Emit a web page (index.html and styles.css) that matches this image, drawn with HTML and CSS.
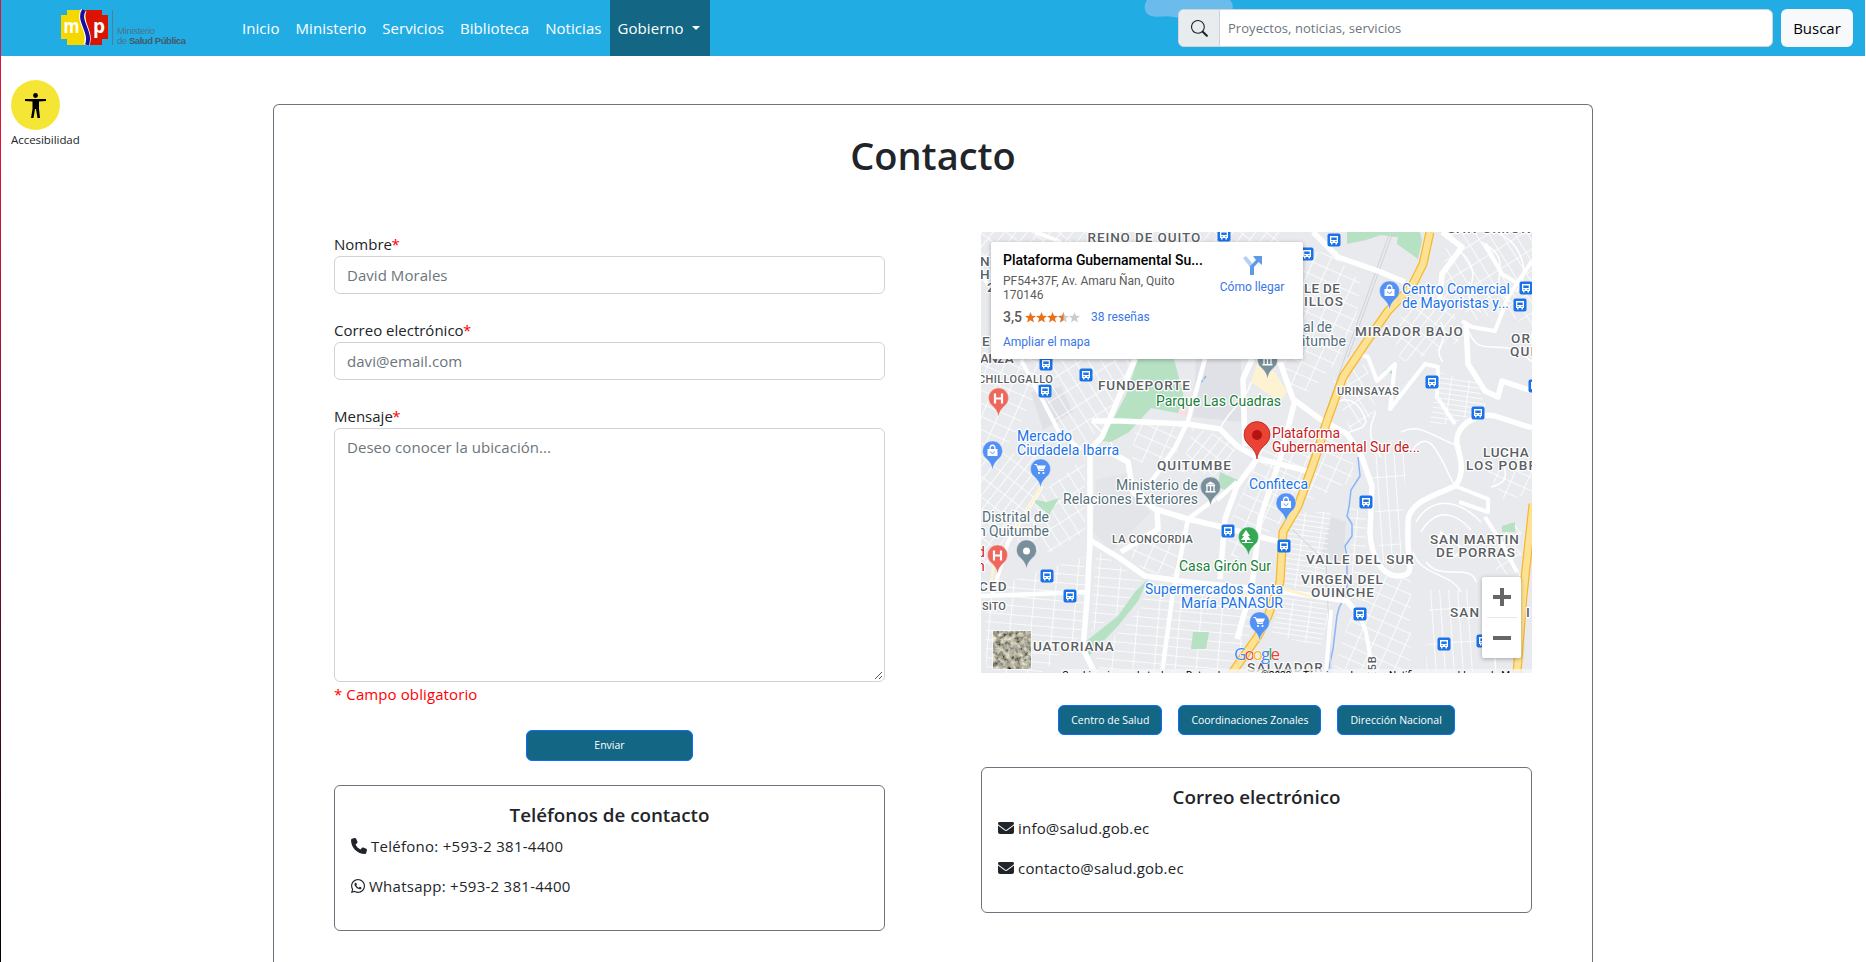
FILE: index.html
```html
<!DOCTYPE html>
<html lang="es">
<head>
<meta charset="utf-8">
<title>Contacto</title>
<link rel="stylesheet" href="styles.css">
</head>
<body>
<header class="navbar">
  <svg class="cloud" width="90" height="18" viewBox="0 0 90 18"><path d="M3 0C-1 6 0 14 7 16C14 18 22 15 29 17C40 19 78 19 84 15C90 11 90 5 86 0Z" fill="#6bbcec"/></svg>
  <svg class="logo" width="128" height="38" viewBox="0 0 128 38">
    <path d="M6 1H29V36H6V30H0V6H6Z" fill="#f5d800"/>
    <path d="M24 1H41V6H47V30H41V36H27Z" fill="#d91400"/>
    <path d="M23 1C16 12 31 22 25.500 36" fill="none" stroke="#fff" stroke-width="6"/>
    <path d="M23 1C16 12 31 22 26 36" fill="none" stroke="#1a0fa0" stroke-width="4"/>
    <text x="2.500" y="24" class="logo-letter" textLength="16" lengthAdjust="spacingAndGlyphs">m</text>
    <text x="32" y="24" class="logo-letter">p</text>
    <path d="M51.500 1V36" stroke="#4d8196"/>
    <text x="56" y="25" class="logo-text" textLength="38">Ministerio</text>
    <text x="56" y="35" class="logo-text" textLength="69">de <tspan class="logo-strong">Salud Pública</tspan></text>
  </svg>
  <nav class="menu">
    <a>Inicio</a><a>Ministerio</a><a>Servicios</a><a>Biblioteca</a><a>Noticias</a>
    <a class="active">Gobierno <i class="caret"></i></a>
  </nav>
  <div class="search">
    <span class="search-icon"><svg width="17" height="17" viewBox="0 0 16 16"><path fill="#212529" d="M11.742 10.344a6.500 6.500 0 1 0-1.397 1.398l3.850 3.850a1 1 0 0 0 1.415-1.414l-3.850-3.850zM12 6.500a5.500 5.500 0 1 1-11 0 5.500 5.500 0 0 1 11 0z"/></svg></span>
    <span class="search-field">Proyectos, noticias, servicios</span>
  </div>
  <button class="search-btn">Buscar</button>
</header>

<div class="access">
  <svg width="49" height="50" viewBox="0 0 49 50"><ellipse cx="24.500" cy="25" rx="24.500" ry="25" fill="#f5e635"/><circle cx="24.500" cy="15.500" r="2.400"/><path d="M14 19H35V21L28 21.500V29L29 38H26.500L25 29H24L22.500 38H20L21.500 29V21.500L14 21Z"/></svg>
  <span>Accesibilidad</span>
</div>

<main class="panel">
  <h1>Contacto</h1>
  <div class="columns">
    <section class="col">
      <label>Nombre<em>*</em></label>
      <div class="field">David Morales</div>
      <label>Correo electrónico<em>*</em></label>
      <div class="field">davi@email.com</div>
      <label>Mensaje<em>*</em></label>
      <div class="field area">Deseo conocer la ubicación...
        <svg class="grip" width="9" height="9" viewBox="0 0 9 9"><path d="M1 8L8 1M5 8L8 5" stroke="#555" fill="none"/></svg>
      </div>
      <p class="required">* Campo obligatorio</p>
      <button class="btn send">Enviar</button>
      <div class="card">
        <h2>Teléfonos de contacto</h2>
        <p><svg width="16" height="16" viewBox="0 0 512 512"><path fill="#212529" d="M164.900 24.600c-7.700-18.600-28-28.500-47.400-23.200l-88 24C12.100 30.200 0 46 0 64C0 311.400 200.600 512 448 512c18 0 33.800-12.100 38.600-29.500l24-88c5.300-19.400-4.600-39.700-23.200-47.400l-96-40c-16.300-6.800-35.200-2.100-46.300 11.600L304.700 368C234.300 334.700 177.300 277.700 144 207.300L193.300 167c13.700-11.200 18.400-30 11.600-46.300l-40-96z"/></svg><span class="phone">Teléfono: +593-2 381-4400</span></p>
        <p><svg width="14" height="16" viewBox="0 0 448 512"><path fill="#212529" d="M380.900 97.100C339 55.100 283.200 32 223.900 32c-122.400 0-222 99.600-222 222 0 39.100 10.200 77.300 29.600 111L0 480l117.700-30.900c32.400 17.700 68.900 27 106.100 27h.1c122.300 0 224.100-99.600 224.100-222 0-59.300-25.200-115-67.100-157zm-157 341.600c-33.200 0-65.700-8.900-94-25.700l-6.700-4-69.800 18.300L72 359.200l-4.400-7c-18.500-29.400-28.200-63.300-28.200-98.200 0-101.700 82.800-184.500 184.600-184.500 49.300 0 95.600 19.200 130.400 54.100 34.800 34.900 56.200 81.200 56.100 130.500 0 101.800-84.900 184.600-186.600 184.600zm101.200-138.200c-5.500-2.800-32.800-16.200-37.900-18-5.100-1.900-8.800-2.800-12.500 2.800-3.700 5.600-14.300 18-17.600 21.800-3.200 3.700-6.500 4.200-12 1.400-32.600-16.300-54-29.100-75.500-66-5.700-9.800 5.700-9.100 16.300-30.300 1.800-3.700.9-6.900-.5-9.700-1.400-2.800-12.500-30.100-17.100-41.200-4.500-10.800-9.100-9.300-12.500-9.500-3.200-.2-6.900-.2-10.600-.2-3.700 0-9.700 1.400-14.800 6.900-5.100 5.600-19.400 19-19.400 46.300 0 27.300 19.900 53.700 22.600 57.400 2.800 3.700 39.100 59.700 94.800 83.800 35.200 15.200 49 16.500 66.600 13.900 10.700-1.600 32.800-13.400 37.400-26.400 4.600-13 4.600-24.100 3.200-26.400-1.300-2.500-5-3.900-10.500-6.600z"/></svg><span class="phone">Whatsapp: +593-2 381-4400</span></p>
      </div>
    </section>

    <section class="col">
      <div class="map">
        <svg width="551" height="441" viewBox="0 0 551 441">
          <defs>
            <pattern id="g1" width="9" height="16" patternUnits="userSpaceOnUse" patternTransform="rotate(38)"><path d="M0 0H9M0 0V16" class="st"/></pattern>
            <pattern id="g2" width="11" height="18" patternUnits="userSpaceOnUse" patternTransform="rotate(-32)"><path d="M0 0H11M0 0V18" class="st"/></pattern>
            <pattern id="g3" width="21" height="9" patternUnits="userSpaceOnUse" patternTransform="rotate(5)"><path d="M0 0H21M0 0V9" class="st"/></pattern>
            <pattern id="g4" width="18" height="5" patternUnits="userSpaceOnUse" patternTransform="rotate(8)"><path d="M0 0H18M0 0V5" class="st"/></pattern>
            <pattern id="g5" width="9" height="34" patternUnits="userSpaceOnUse" patternTransform="rotate(-4)"><path d="M0 0H9M0 0V34" class="st"/></pattern>
            <pattern id="g6" width="15" height="12" patternUnits="userSpaceOnUse" patternTransform="rotate(24)"><path d="M0 0H15M0 0V12" class="st"/></pattern>
            <g id="bus"><rect x="-6.500" y="-6.500" width="13" height="13" rx="2" fill="#1a73e8"/><path d="M-4 -4H4V3H3V4.500H1.500V3H-1.500V4.500H-3V3H-4Z" fill="#fff"/><path d="M-2.700 -2.500H2.700V0H-2.700Z" fill="#1a73e8"/><path d="M-2.500 1.500H-1.300M1.300 1.500H2.500" stroke="#1a73e8"/></g>
            <path id="pin" d="M0 0C-1 -6 -3 -8 -6 -11A10 10 0 1 1 6 -11C3 -8 1 -6 0 0Z" stroke="#fff" stroke-opacity=".5" stroke-width=".7"/>
            <g id="bag"><use href="#pin" fill="#5491f5"/><path d="M-5 -21H5V-14H-5Z" fill="#fff"/><path d="M-2.500 -21C-2.500 -26 2.500 -26 2.500 -21" fill="none" stroke="#fff" stroke-width="1.300"/><path d="M-2 -18.500C-1.500 -16 1.500 -16 2 -18.500" fill="none" stroke="#5491f5"/></g>
            <g id="cart"><use href="#pin" fill="#5491f5"/><path d="M-6 -23.500H-4L-1.500 -17.500H3.500" fill="none" stroke="#fff" stroke-width="1.200"/><path d="M-3.500 -22.500H5.500L3.500 -18.500H-2Z" fill="#fff"/><circle cx="-1.500" cy="-15" r="1.100" fill="#fff"/><circle cx="3" cy="-15" r="1.100" fill="#fff"/></g>
            <g id="hosp"><use href="#pin" fill="#ee675c"/><path d="M-3.500 -23.500V-13.500M3.500 -23.500V-13.500M-3.500 -18.500H3.500" stroke="#fff" stroke-width="2.200"/></g>
            <g id="gov"><use href="#pin" fill="#78909c"/><path d="M-5 -21.500L0 -24.500L5 -21.500ZM-5 -15H5V-13.500H-5Z" fill="#fff"/><path d="M-4.500 -20.500H4.500M-3.500 -20V-15M0 -20V-15M3.500 -20V-15" stroke="#fff" stroke-width="1.300"/></g>
            <filter id="aerial" x="0" y="0" width="1" height="1"><feTurbulence type="fractalNoise" baseFrequency=".2" numOctaves="4" seed="8"/><feColorMatrix values="1.300 .3 0 0 -.36  1.200 .35 0 0 -.35  1 .4 0 0 -.36  0 0 0 0 1"/></filter>
          </defs>
          <rect width="551" height="441" fill="#e8eaed"/>
          <g fill="#dfe1e6"><path d="M115 248L150 240L152 262L170 280L130 320L112 300Z" fill="#e3e5e9"/><path d="M215 125H260V190L212 185Z"/><path d="M350 285L365 290L362 330L340 325Z"/><path d="M50 160L80 155L92 180L62 198Z"/></g>
          <path d="M0 0H106V30H0ZM215 0H300V10H215Z" fill="url(#g1)"/>
          <path d="M54 138L80 128H150L128 185L100 218L78 200Z" fill="url(#g2)"/>
          <path d="M0 120H55L60 150L30 210L0 220Z" fill="url(#g6)"/>
          <path d="M0 220L55 222L62 250L30 310L0 345Z" fill="url(#g1)"/>
          <path d="M60 262L104 225V300L70 320L30 318Z" fill="url(#g2)"/>
          <path d="M5 362L40 345L104 325V400L60 441H5Z" fill="url(#g3)"/>
          <path d="M115 318L160 348L140 380L110 400Z" fill="url(#g3)"/>
          <path d="M165 350L275 360L270 400L245 441H120L115 425L160 375Z" fill="url(#g3)"/>
          <path d="M155 190L205 192L195 225L150 232Z" fill="url(#g6)"/>
          <path d="M212 195L255 210L250 245L200 240Z" fill="url(#g1)"/>
          <path d="M140 318L175 298L205 300L198 345L166 340Z" fill="url(#g6)"/>
          <path d="M282 215L345 195L325 250L300 290L252 330L245 300Z" fill="url(#g6)"/>
          <path d="M306 300L318 280L350 280L342 358L301 356Z" fill="url(#g4)"/>
          <path d="M300 365L350 372L340 415L290 402Z" fill="url(#g4)"/>
          <path d="M345 195L375 215L370 250L325 270Z" fill="url(#g6)"/>
          <path d="M388 215L425 222L420 340L400 330L392 260Z" fill="url(#g5)"/>
          <path d="M368 275L385 280V380L372 360Z" fill="url(#g3)"/>
          <path d="M395 345L430 340V441H350L370 385Z" fill="url(#g6)"/>
          <path d="M300 20H350L380 50L372 110L330 160L310 155L300 127Z" fill="url(#g6)"/>
          <path d="M410 95L445 60L470 60L478 110L440 125L420 130Z" fill="url(#g1)"/>
          <path d="M458 140L495 150L505 175L475 190L448 195Z" fill="url(#g4)"/>
          <path d="M465 0H551V95L520 80L490 90L463 50Z" fill="url(#g2)"/>
          <path d="M448 358L490 358L500 441H445Z" fill="url(#g5)"/>
          <path d="M508 300L540 290V345L515 340Z" fill="url(#g2)"/>
          <path d="M505 240L551 225V260L525 270Z" fill="url(#g6)"/>
          <path d="M350 150L385 130L395 180L370 200Z" fill="url(#g2)"/>
          <g fill="none" stroke="#fff" stroke-width="1.500">
            <path d="M435 290C450 265 475 265 500 290M440 300C455 275 475 280 490 298M432 320C440 345 470 340 480 360M445 330C460 350 490 330 495 350M460 300C450 325 475 335 480 315Z"/>
            <path d="M480 20C510 50 470 60 500 80M500 10C540 30 500 50 530 70M515 0C540 10 551 40 535 60M488 50C498 70 510 40 520 60M488 100C500 130 520 100 551 130M460 90C470 110 450 115 462 130"/>
            <path d="M430 220C450 190 460 230 474 254M420 200C440 190 450 205 480 215M395 180C385 200 390 210 400 225M520 225C525 240 530 250 510 255M515 350C520 370 510 400 515 441"/>
            <path d="M350 175C365 160 380 170 385 190C380 200 375 195 366 202M270 150C265 170 250 175 240 195M110 189C125 205 140 215 124 217"/>
          </g>
          <g fill="#b7e1c3">
            <path d="M157 127H193L203 165L207 183L170 176L148 200L130 210L121 209L145 163Z"/>
            <path d="M366 0H424L415 5L400 3L385 8L366 12ZM417 0H439L441 9L437 27L416 12Z"/>
            <path d="M50 267L66 270L78 266L68 283ZM167 347L157 369L137 394L107 425L104 410L137 384L154 360ZM212 400H228L225 417H210ZM239 240L259 249L249 260L237 255ZM521 294L534 290V300H521ZM403 138L411 134V142Z"/>
          </g>
          <path d="M203 160L207 185L197 182Z" fill="#fadfe0"/>
          <path d="M277 130L294 140L306 160L299 170L270 150Z" fill="#fdf3d3"/>
          <path d="M377 225L379 244L370 258L368 275L366 284L371 292L371 304L364 314L366 326V360L358 376L356 384L352 417L347 441M219 151L222 148M223 147L225 144" fill="none" stroke="#8ab4f8" stroke-width="1.500"/>
          <path d="M409 0L364 125L341 192L322 250M311 297L345 330L350 441M412 0L367 125" fill="none" stroke="#cfd2d8"/>
          <g fill="none" stroke="#fff" stroke-width="5.500" stroke-linejoin="round">
            <path d="M154 127L121 205L109 217V310L106 367L102 417L114 441"/>
            <path d="M107 307L137 325L164 344L207 350L277 357L306 360L366 369L379 384"/>
            <path d="M124 217L147 230L152 260L174 277L207 287L241 295L299 310"/>
            <path d="M176 277L177 297L140 320"/>
            <path d="M271 127L262 147L264 214M314 168L306 200L299 227L279 287L271 354L256 407"/>
            <path d="M276 227L256 254L244 287L239 347"/>
            <path d="M111 189H140L206 192L239 197L256 214L279 227L326 239"/>
            <path d="M299 130L312 167L339 187L366 202L379 220L391 254L389 300C390 325 401 344 417 344S429 335 427 315V290C427 270 455 263 474 254C480 248 483 235 477 217C470 195 495 180 514 184L551 196"/>
            <path d="M474 254L507 267V280L478 270M504 285L520 310L536 340" stroke-width="4"/>
            <path d="M332 0L341 9L357 25L397 39L424 50M461 0L481 15L461 42L458 75M485 92L487 132L504 159L517 165L521 149L551 159"/>
            <path d="M551 29L527 65L514 99L491 95L481 89M504 12L521 42L551 60M377 122L387 125L396 149L414 132L409 177L444 132L457 135L456 165L474 192" stroke-width="4"/>
            <path d="M224 127L207 189L194 216L170 250M234 267L207 287L191 367L181 441M0 364L54 362L104 360M256 250L236 268" stroke-width="4.500"/>
            <path d="M61 254L27 310L11 364M0 42L12 60M54 0L80 10M40 128L60 165L78 200L100 218M379 384L385 400L392 441M350 378L345 441" stroke-width="4"/>
          </g>
          <path d="M60 255L36 295M13 330L9 360M303 357L332 365M250 364L300 360" stroke="#fdf3d3" stroke-width="3" fill="none"/>
          <g fill="none" stroke-linejoin="round">
            <path d="M449 0L442 32L431 54L407 79L384 112L362 145L346 189L334 227L317 274L302 300L299 350L287 384L277 404L251 441M552 272L546 327L542 364L536 441" stroke="#f9ab00" stroke-opacity=".8" stroke-width="9"/>
            <path d="M449 0L442 32L431 54L407 79L384 112L362 145L346 189L334 227L317 274L302 300L299 350L287 384L277 404L251 441M552 272L546 327L542 364L536 441" stroke="#fde293" stroke-width="6.500"/>
          </g>
          <g>
            <use href="#bus" x="243" y="3"/><use href="#bus" x="65" y="132"/><use href="#bus" x="105" y="143"/><use href="#bus" x="64" y="159"/><use href="#bus" x="353" y="8"/><use href="#bus" x="326" y="22"/><use href="#bus" x="545" y="56"/><use href="#bus" x="539" y="73"/><use href="#bus" x="451" y="150"/><use href="#bus" x="497" y="181"/><use href="#bus" x="554" y="154"/><use href="#bus" x="66" y="344"/><use href="#bus" x="89" y="364"/><use href="#bus" x="247" y="299"/><use href="#bus" x="303" y="314"/><use href="#bus" x="385" y="270"/><use href="#bus" x="379" y="382"/><use href="#bus" x="463" y="412"/><use href="#bus" x="502" y="409"/>
          </g>
          <use href="#hosp" x="17.500" y="185"/><use href="#hosp" x="16.500" y="342"/>
          <use href="#bag" x="11.500" y="238"/><use href="#cart" x="59.500" y="256"/><use href="#bag" x="408.500" y="78"/><use href="#bag" x="305" y="290"/><use href="#cart" x="278.500" y="409"/>
          <use href="#gov" x="229.500" y="274"/><use href="#gov" x="286.500" y="147"/>
          <use href="#pin" x="45.500" y="337" fill="#78909c"/><circle cx="45.500" cy="319" r="3.500" fill="#fff"/>
          <use href="#pin" x="267.500" y="324" fill="#34a853"/><path d="M265 298L269 304H267L270 308H266V310H272V311H261V310H264V308H260L263 304H261Z" fill="#fff"/>
          <path d="M276 227C275 219 271 216 267 212A13 13 0 1 1 285 212C281 216 277 219 276 227Z" fill="#ea4335" stroke="#b31412" stroke-width=".7"/><circle cx="276" cy="203" r="5" fill="#b31412"/>
          <g class="place">
            <text x="106.500" y="10" textLength="114">REINO DE QUITO</text>
            <text x="-1" y="34">NT</text><text x="-1" y="47">HI</text><text x="6" y="60">2</text>
            <text x="1" y="114">E</text><text x="-1" y="131" textLength="35">ANZA</text>
            <text x="117" y="158" textLength="93">FUNDEPORTE</text>
            <text x="323" y="61" textLength="37">LE DE</text><text x="323" y="74" textLength="40">ILLOS</text>
            <text x="466" y="1" textLength="85">SAN SIMON</text>
            <text x="374" y="104" textLength="109">MIRADOR BAJO</text>
            <text x="530" y="111">ORI</text><text x="529" y="124">QUI</text>
            <text x="502" y="225" textLength="47">LUCHA</text><text x="485" y="238">LOS POBR</text>
            <text x="176" y="238" textLength="75">QUITUMBE</text>
            <text x="325" y="332" textLength="109">VALLE DEL SUR</text>
            <text x="320" y="351.500" textLength="83">VIRGEN DEL</text><text x="330" y="365" textLength="64">OUINCHE</text>
            <text x="449" y="312" textLength="90">SAN MARTIN</text><text x="455" y="325" textLength="80">DE PORRAS</text>
            <text x="469" y="385">SAN</text><text x="545" y="385">I</text>
            <text x="-2" y="359">CED</text><text x="52" y="419" textLength="82">UATORIANA</text>
            <text x="266" y="440" textLength="77">SALVADOR</text>
          </g>
          <g class="place small">
            <text x="-3" y="151" textLength="76">CHILLOGALLO</text><text x="356" y="163" textLength="63">URINSAYAS</text>
            <text x="131" y="311" textLength="82">LA CONCORDIA</text><text x="1" y="378" textLength="25">SITO</text>
            <text transform="translate(395 446) rotate(-90)">E5B</text>
          </g>
          <g class="poi green"><text x="175" y="174" textLength="125">Parque Las Cuadras</text><text x="198" y="339" textLength="92">Casa Girón Sur</text></g>
          <g class="poi blue">
            <text x="36" y="209" textLength="55">Mercado</text><text x="36" y="223" textLength="102">Ciudadela Ibarra</text>
            <text x="421" y="62" textLength="108">Centro Comercial</text><text x="421" y="76" textLength="107">de Mayoristas y...</text>
            <text x="268" y="257" textLength="59">Confiteca</text>
            <text x="164" y="362" textLength="138">Supermercados Santa</text><text x="200" y="376" textLength="102">María PANASUR</text>
          </g>
          <g class="poi slate">
            <text x="322" y="100" textLength="29">al de</text><text x="321" y="114" textLength="44">itumbe</text>
            <text x="135" y="258" textLength="82">Ministerio de</text><text x="82" y="272" textLength="135">Relaciones Exteriores</text>
            <text x="1" y="290" textLength="67">Distrital de</text><text x="-3" y="304" textLength="71">n Quitumbe</text>
          </g>
          <g class="poi red"><text x="291" y="206" textLength="68">Plataforma</text><text x="291" y="220" textLength="148">Gubernamental Sur de...</text><text x="-4" y="325">d</text><text x="-4" y="339">n</text></g>
          <text x="253" y="428" class="google" textLength="46"><tspan fill="#4285f4">G</tspan><tspan fill="#ea4335">o</tspan><tspan fill="#fbbc04">o</tspan><tspan fill="#4285f4">g</tspan><tspan fill="#34a853">l</tspan><tspan fill="#ea4335">e</tspan></text>
          <rect x="80" y="437" width="471" height="4" fill="#f5f5f5" fill-opacity=".75"/>
          <g class="credit"><text x="81" y="447">Combinaciones de teclas</text><text x="205" y="447">Datos de mapas</text><text x="280" y="447">©2022</text><text x="322" y="447">Términos de uso</text><text x="408" y="447">Notificar un problema de Maps</text></g>
          <rect x="11.500" y="398.500" width="39" height="39" fill="#fff"/><rect x="12.500" y="399.500" width="37" height="37" filter="url(#aerial)"/>
        </svg>
        <div class="info">
          <div class="info-main">
            <strong>Plataforma Gubernamental Su...</strong>
            <address>PF54+37F, Av. Amaru Ñan, Quito<br>170146</address>
            <div class="rating"><b>3,5</b>
              <svg width="56" height="11" viewBox="0 0 56 11"><defs><path id="star" d="M5.500 0L7 3.800L11 4L7.900 6.600L9 10.500L5.500 8.300L2 10.500L3.100 6.600L0 4L4 3.800Z"/></defs><g fill="#e7711b"><use href="#star"/><use href="#star" x="11"/><use href="#star" x="22"/></g><use href="#star" x="33" fill="#ccc"/><path d="M38.500 0V8.300L35 10.500L36.100 6.600L33 4L37 3.800Z" fill="#e7711b"/><use href="#star" x="44" fill="#ccc"/></svg>
              <a>38 reseñas</a></div>
            <a>Ampliar el mapa</a>
          </div>
          <div class="info-go"><svg width="19" height="19" viewBox="0 0 19 19"><path d="M0 2L3 0L9 7L7 11Z" fill="#b3d0f5"/><path d="M7 19V10L13 4L10 0H19V9L15.500 6L11 11V19Z" fill="#5e9ae6"/></svg><a>Cómo llegar</a></div>
        </div>
        <div class="zoom"><svg width="39" height="81" viewBox="0 0 39 81"><path d="M11 20H29M20 11V29M11 61H29" stroke="#666" stroke-width="4"/><path d="M5 40.500H35" stroke="#e6e6e6"/></svg></div>
      </div>
      <div class="places"><button class="btn">Centro de Salud</button><button class="btn">Coordinaciones Zonales</button><button class="btn">Dirección Nacional</button></div>
      <div class="card">
        <h2>Correo electrónico</h2>
        <p><svg width="16" height="16" viewBox="0 0 512 512"><path fill="#212529" d="M48 64C21.500 64 0 85.500 0 112c0 15.100 7.100 29.300 19.200 38.400L236.800 313.600c11.400 8.500 27 8.500 38.400 0L492.800 150.400c12.100-9.100 19.200-23.300 19.200-38.400c0-26.500-21.500-48-48-48H48zM0 176V384c0 35.300 28.700 64 64 64H448c35.300 0 64-28.700 64-64V176L294.400 339.200c-22.800 17.100-54 17.100-76.800 0L0 176z"/></svg><span class="mail">info@salud.gob.ec</span></p>
        <p><svg width="16" height="16" viewBox="0 0 512 512"><path fill="#212529" d="M48 64C21.500 64 0 85.500 0 112c0 15.100 7.100 29.300 19.200 38.400L236.800 313.600c11.400 8.500 27 8.500 38.400 0L492.800 150.400c12.100-9.100 19.200-23.300 19.200-38.400c0-26.500-21.500-48-48-48H48zM0 176V384c0 35.300 28.700 64 64 64H448c35.300 0 64-28.700 64-64V176L294.400 339.200c-22.800 17.100-54 17.100-76.800 0L0 176z"/></svg><span class="mail">contacto@salud.gob.ec</span></p>
      </div>
    </section>
  </div>
</main>
</body>
</html>
```

FILE: styles.css
```css
* { box-sizing: border-box; }
html { background: #fff; overflow: hidden; }
body {
  margin: 0; height: 962px; overflow: hidden; padding: 0 1px;
  position: relative;
  font: 15px/24px "Open Sans", "Noto Sans", sans-serif; color: #212529;
  background: linear-gradient(#dc143c 160px, #4a0828 700px, #050008 940px) 0 0 / 1px 100% no-repeat #fff;
}
.navbar { height: 56px; background: #21ade4; display: flex; align-items: center; padding: 0 12px 0 60px; position: relative; }
.cloud { position: absolute; left: 1143px; top: 0; }
.logo { flex: none; margin-bottom: 8px; margin-top: 8px; }
.logo-letter { font: 700 19px "Open Sans", sans-serif; fill: #fff; }
.logo-text { font: 9.500px "Liberation Sans", sans-serif; fill: #4d7384; }
.logo-strong { font-weight: 700; fill: #44596a; }
.menu { display: flex; margin-left: 45px; height: 56px; width: 476px; flex: none; }
.menu a { padding: 0 8px; line-height: 56px; color: #fff; white-space: nowrap; letter-spacing: .06px; }
.menu .active { background: #136785; display: flex; align-items: center; width: 100px; }
.caret { border: 4.500px solid transparent; border-top-color: #fff; border-bottom: 0; margin-left: 8px; }
.search { margin-left: auto; width: 595px; height: 38px; display: flex; border: 1px solid #ced4da; border-radius: 6px; background: #fff; overflow: hidden; position: relative; flex: none; }
.search-icon { width: 41px; background: #e9ecef; border-right: 1px solid #ced4da; display: flex; align-items: center; justify-content: center; }
.search-field { padding-left: 8px; line-height: 37px; font-size: 13px; letter-spacing: .05px; color: #6c757d; }
.search-btn { margin-left: 8px; width: 72px; height: 38px; border: 0; border-radius: 6px; background: #f8f9fa; font: inherit; color: #000; padding: 0; flex: none; }
.access { position: absolute; left: 11px; top: 80px; display: flex; flex-direction: column; font-size: 11.500px; line-height: 19px; letter-spacing: -.05px; }
.panel { margin: 48px 0 0 272px; width: 1320px; height: 858px; border: 1px solid #6c757d; border-bottom: 0; border-radius: 6px 6px 0 0; padding: 26px 60px 0; }
h1 { margin: 0; font-size: 38px; line-height: 48px; font-weight: 570; text-align: center; letter-spacing: 0; }
.columns { display: flex; gap: 96px; margin-top: 53px; }
.col { width: 551px; flex: none; display: flex; flex-direction: column; }
label { display: block; height: 24px; line-height: 24px; }
label em { color: #f00; font-style: normal; margin-left: -.5px; }
.field { height: 38px; border: 1px solid #ced4da; border-radius: 6px; padding: 0 12px; line-height: 36px; color: #6c757d; margin-bottom: 24px; letter-spacing: .05px; }
.area { height: 254px; margin-bottom: 0; position: relative; }
.grip { position: absolute; right: 1px; bottom: 1px; }
.required { margin: 0; color: #f00; line-height: 24px; letter-spacing: .1px; }
.btn { height: 30px; border: 1px solid #0d6efd; border-radius: 6px; background: #136785; color: #fff; font: 10.500px/20px "Open Sans", sans-serif; padding: 0 12px; white-space: nowrap; }
.send { width: 167px; height: 31px; align-self: center; margin: 24px 0; padding-bottom: 2px; }
.card { height: 146px; border: 1px solid #6c757d; border-radius: 6px; padding: 17px 16px; }
.card h2 { margin: 0 0 7px; font-size: 18.800px; line-height: 24px; font-weight: 570; text-align: center; }
.card p { margin: 0 0 16px; height: 24px; display: flex; align-items: center; gap: 4px; }
.phone { letter-spacing: .27px; }
.mail { letter-spacing: .2px; }
.places { display: flex; gap: 16px; justify-content: center; margin: 32px 0; }
.map { position: relative; width: 551px; height: 441px; overflow: hidden; font-family: Roboto, sans-serif; }
.map > svg { display: block; }
.st { stroke: #fff; stroke-width: 1.600; fill: none; }
.map text { paint-order: stroke; stroke: #fff; stroke-width: 2.500px; stroke-linejoin: round; }
.place { font-size: 13.500px; font-weight: 500; fill: #5b6065; letter-spacing: 1.200px; }
.small { font-size: 11px; }
.poi { font-size: 14px; }
.green { fill: #188038; }
.blue { fill: #1a73e8; }
.slate { fill: #546e7a; }
.red { fill: #c5221f; }
.map .google { font: 500 17px "Open Sans", sans-serif; stroke-width: 1px; }
.map .credit text { font-size: 10px; fill: #000; stroke: none; }
.info { position: absolute; left: 10px; top: 10px; width: 312px; height: 117px; background: #fff; border-radius: 2px; box-shadow: 0 1px 4px rgba(0,0,0,.3); padding: 9px 12px; display: flex; font-size: 12px; line-height: 14px; color: #5b5b5b; }
.info a { color: #3a76e8; }
.info-main { width: 208px; }
.info strong { display: block; font-size: 14px; line-height: 18px; font-weight: 500; color: #000; white-space: nowrap; letter-spacing: -.04px; }
.info address { font-style: normal; margin-top: 5px; }
.rating { display: flex; align-items: center; margin: 8px 0 11px; }
.rating b { font-size: 14px; font-weight: 500; width: 22px; }
.rating a { margin-left: 10px; }
.info-go { flex: 1; display: flex; flex-direction: column; align-items: center; padding-top: 5px; gap: 5px; white-space: nowrap; margin-right: -2px; }
.zoom { position: absolute; left: 501px; top: 345px; width: 39px; height: 81px; background: #fff; border-radius: 2px; box-shadow: 0 1px 4px rgba(0,0,0,.3); }
```
